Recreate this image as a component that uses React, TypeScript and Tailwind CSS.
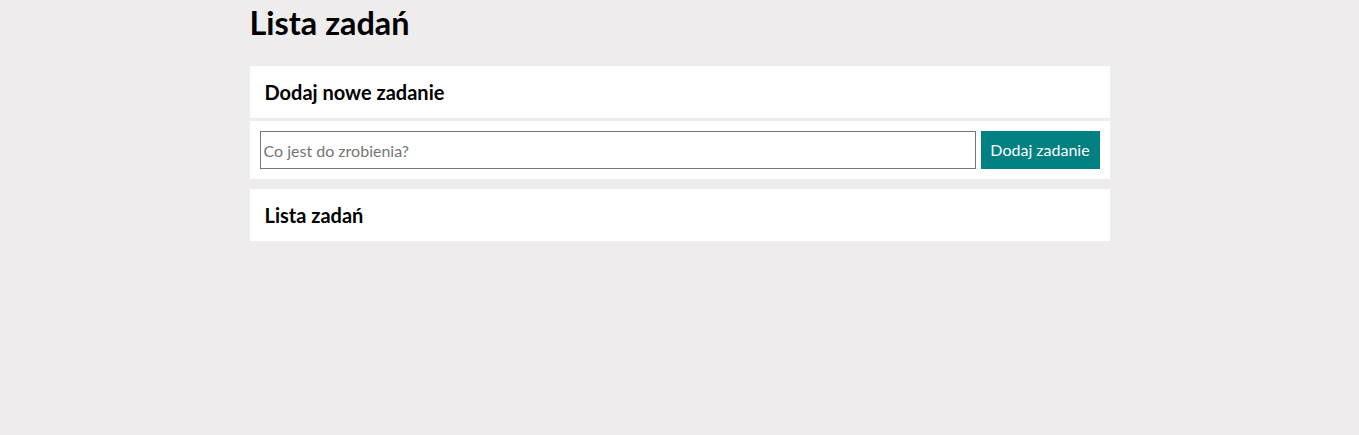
export default function App() {
  return (
    <div className="min-h-[435px] w-full bg-[#eeecec] font-['Lato',sans-serif] text-black">
      <div className="mx-auto w-[860px]">
        <h1 className="pt-[4px] text-[32.4px] font-bold leading-[38px]">Lista zadań</h1>
        <div className="mt-[24px] flex flex-col">
          <div className="bg-white">
            <h2 className="px-[15px] py-[14px] text-[20px] font-bold leading-[24px]">Dodaj nowe zadanie</h2>
          </div>
          <div className="mt-[3px] flex gap-[5px] bg-white p-[10px]">
            <input
              type="text"
              placeholder="Co jest do zrobienia?"
              className="h-[38px] flex-1 border border-[#767676] bg-white px-[3px] text-[16px] text-black placeholder:text-[#757575] outline-none"
            />
            <button className="h-[38px] w-[119px] bg-[#008080] text-[16px] text-white">Dodaj zadanie</button>
          </div>
          <div className="mt-[10px] bg-white">
            <h2 className="px-[15px] py-[14px] text-[20px] font-bold leading-[24px]">Lista zadań</h2>
          </div>
        </div>
      </div>
    </div>
  );
}
